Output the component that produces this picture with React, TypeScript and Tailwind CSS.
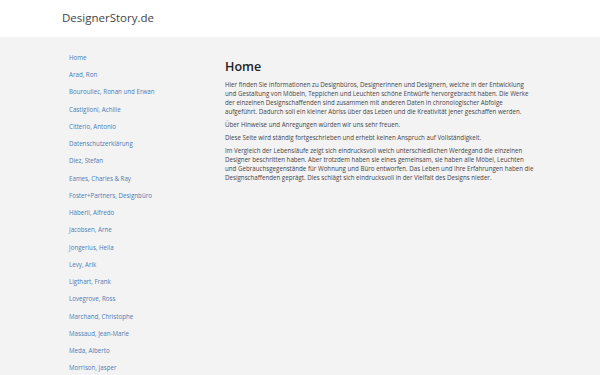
const designers = [
  "Home",
  "Arad, Ron",
  "Bouroullec, Ronan und Erwan",
  "Castiglioni, Achille",
  "Citterio, Antonio",
  "Datenschutzerklärung",
  "Diez, Stefan",
  "Eames, Charles & Ray",
  "Foster+Partners, Designbüro",
  "Häberli, Alfredo",
  "Jacobsen, Arne",
  "Jongerius, Hella",
  "Levy, Arik",
  "Ligthart, Frank",
  "Lovegrove, Ross",
  "Marchand, Christophe",
  "Massaud, Jean-Marie",
  "Meda, Alberto",
  "Morrison, Jasper",
]

export default function App() {
  return (
    <div className="min-h-[375px] bg-[#f3f3f4] font-['Open_Sans',sans-serif] text-[#444]">
      {/* Header */}
      <header className="h-[37px] bg-white flex items-center pl-[62px]">
        <span className="text-[11.5px] text-[#444] -mt-[1px]">DesignerStory.de</span>
      </header>

      <div className="flex">
        {/* Sidebar */}
        <nav className="w-[225px] pl-[69px] pt-[12px] shrink-0">
          <ul>
            {designers.map((name) => (
              <li key={name} className="h-[17.25px] flex items-center">
                <a href="#" className="text-[6.2px] text-[#4b7bb3]">
                  {name}
                </a>
              </li>
            ))}
          </ul>
        </nav>

        {/* Content */}
        <main className="w-[320px] pt-[22px] text-[6.2px] leading-[9px]">
          <h1 className="text-[12.5px] leading-[16px] font-semibold text-[#222] mb-[5px]">Home</h1>
          <p className="mb-[4px]">
            Hier finden Sie Informationen zu Designbüros, Designerinnen und Designern, welche in der Entwicklung
            <br />
            und Gestaltung von Möbeln, Teppichen und Leuchten schöne Entwürfe hervorgebracht haben. Die Werke
            <br />
            der einzelnen Designschaffenden sind zusammen mit anderen Daten in chronologischer Abfolge
            <br />
            aufgeführt. Dadurch soll ein kleiner Abriss über das Leben und die Kreativität jener geschaffen werden.
          </p>
          <p className="mb-[4px]">Über Hinweise und Anregungen würden wir uns sehr freuen.</p>
          <p className="mb-[4px]">Diese Seite wird ständig fortgeschrieben und erhebt keinen Anspruch auf Vollständigkeit.</p>
          <p>
            Im Vergleich der Lebensläufe zeigt sich eindrucksvoll welch unterschiedlichen Werdegand die einzelnen
            <br />
            Designer beschritten haben. Aber trotzdem haben sie eines gemeinsam, sie haben alle Möbel, Leuchten
            <br />
            und Gebrauchsgegenstände für Wohnung und Büro entworfen. Das Leben und ihre Erfahrungen haben die
            <br />
            Designschaffenden geprägt. Dies schlägt sich eindrucksvoll in der Vielfalt des Designs nieder.
          </p>
        </main>
      </div>
    </div>
  )
}
